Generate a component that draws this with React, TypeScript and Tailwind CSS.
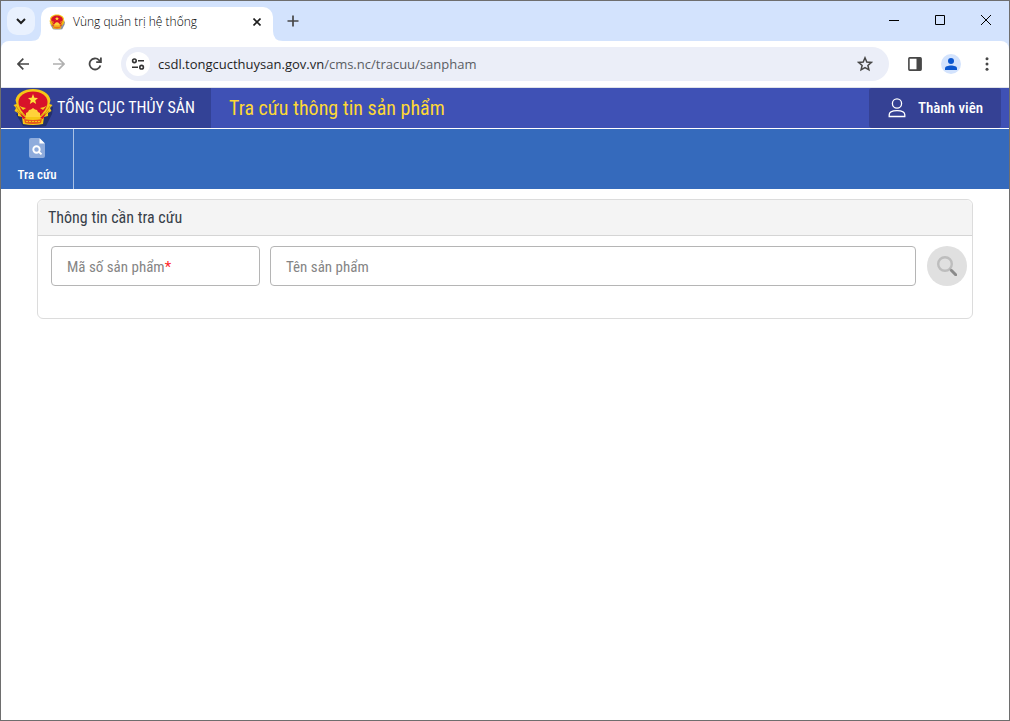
import { useState } from "react";

const Emblem = ({ className }: { className: string }) => (
  <svg viewBox="0 0 40 40" className={className} aria-hidden="true">
    <path d="M3 26 L10 38 Q21 40 33 38 L39 26 L40 19 Z" fill="#141b40" opacity="0.5" />
    <path
      d="M20 1 C11 1 4 5 2.5 12 L3.5 16 L0.5 17 L3 20 L1.5 23 L5 25 L5 28 L9 29 L10 36 Q20 38 30 36 L31 29 L35 28 L35 25 L38.5 23 L37 20 L39.5 17 L36.5 16 L37.5 12 C36 5 29 1 20 1 Z"
      fill="#f5c716"
    />
    <path d="M3 18 Q7 26 12 28 M37 18 Q33 26 28 28 M4 23 L11 30 M36 23 L29 30" stroke="#d79210" strokeWidth="1" fill="none" />
    <path d="M20 3.5 C12 3.5 5.5 8 5.5 14 C5.5 20 10 25 13 28 H27 C30 25 34.5 20 34.5 14 C34.5 8 28 3.5 20 3.5 Z" fill="#d8122a" />
    <path d="M20 6 L21.4 9.8 L25 10 L22.2 12.4 L23.2 16 L20 14 L16.8 16 L17.8 12.4 L15 10 L18.6 9.8 Z" fill="#ffe13a" />
    <path d="M6 17.5 Q8 19 13 20 L10 22 Z M34 17.5 Q32 19 27 20 L30 22 Z" fill="#f8cf1c" />
    <path d="M13 29 L13 25 L15 24 L16 22 L18 21.5 L20 20 L22 21.5 L24 22 L25 24 L27 25 L27 29 Z" fill="#ffd23a" />
    <path d="M7 25 L13 30 L10 31 Z M33 25 L27 30 L30 31 Z" fill="#d8122a" />
    <path d="M11 31 Q20 33 29 31 L28 35 Q20 37 12 35 Z" fill="#e65a1c" />
    <path d="M13 33.5 H27" stroke="#f5c716" strokeWidth="1" strokeDasharray="2 1" />
  </svg>
);

const TabStrip = () => (
  <div className="flex h-10 items-start bg-[#d3e3fd]">
    <button aria-label="Tìm thẻ" className="ml-1.5 mt-1.5 flex size-7 items-center justify-center rounded-[10px] bg-[#e9f1fe]">
      <svg viewBox="0 0 10 10" className="size-2.5" fill="none" stroke="#1f1f1f" strokeWidth="2">
        <path d="M1 3 L5 7 L9 3" />
      </svg>
    </button>
    <div className="mt-1.5 flex h-[34px] items-end">
      <svg viewBox="0 0 10 10" className="-ml-1 size-2.5" aria-hidden="true">
        <path d="M10 0 V10 H0 Q10 10 10 0" fill="#fff" />
      </svg>
      <div className="flex h-full w-[232px] items-center rounded-t-[10px] bg-white px-2 pb-1">
        <Emblem className="size-4 shrink-0" />
        <span className="ml-2 grow text-[12px] font-light text-black">Vùng quản trị hệ thống</span>
        <button aria-label="Đóng thẻ" className="flex size-4 items-center justify-center">
          <svg viewBox="0 0 8 8" className="size-2" stroke="#1f1f1f" strokeWidth="1.6">
            <path d="M0.5 0.5 L7.5 7.5 M7.5 0.5 L0.5 7.5" />
          </svg>
        </button>
      </div>
      <svg viewBox="0 0 10 10" className="size-2.5" aria-hidden="true">
        <path d="M0 0 V10 H10 Q0 10 0 0" fill="#fff" />
      </svg>
    </div>
    <button aria-label="Thẻ mới" className="ml-0.5 mt-3 flex size-4 items-center justify-center">
      <svg viewBox="0 0 12 12" className="size-3" stroke="#474747" strokeWidth="1.7">
        <path d="M6 0.5 V11.5 M0.5 6 H11.5" />
      </svg>
    </button>
    <div className="ml-auto flex">
      <button aria-label="Thu nhỏ" className="flex h-[38px] w-[46px] items-center justify-center">
        <svg viewBox="0 0 10 10" className="size-2.5" stroke="#000"><path d="M0 5.5 H10" /></svg>
      </button>
      <button aria-label="Phóng to" className="flex h-[38px] w-[46px] items-center justify-center">
        <svg viewBox="0 0 10 10" className="size-2.5" stroke="#000" fill="none"><path d="M0.5 0.5 H9.5 V9.5 H0.5 Z" /></svg>
      </button>
      <button aria-label="Đóng" className="flex h-[38px] w-[46px] items-center justify-center">
        <svg viewBox="0 0 10 10" className="size-2.5" stroke="#000"><path d="M0 0 L10 10 M10 0 L0 10" /></svg>
      </button>
    </div>
  </div>
);

const AddressBar = () => (
  <div className="bg-[#d3e3fd]">
    <div className="flex h-[47px] items-center rounded-t-lg border-b border-[#dfe2e8] bg-white px-3">
      <button aria-label="Quay lại" className="flex size-5 items-center justify-center">
        <svg viewBox="0 0 12 12" className="size-3" fill="none" stroke="#474747" strokeWidth="1.7">
          <path d="M12 6 H1.2 M6.3 0.7 L1 6 L6.3 11.3" />
        </svg>
      </button>
      <button aria-label="Tiếp" disabled className="ml-4 flex size-5 items-center justify-center">
        <svg viewBox="0 0 12 12" className="size-3" fill="none" stroke="#b0b0b0" strokeWidth="1.7">
          <path d="M0 6 H10.8 M5.7 0.7 L11 6 L5.7 11.3" />
        </svg>
      </button>
      <button aria-label="Tải lại" className="ml-4 flex size-5 items-center justify-center">
        <svg viewBox="0 0 14 14" className="size-3.5" fill="none" stroke="#474747" strokeWidth="1.8">
          <path d="M12.4 8.4 A5.5 5.5 0 1 1 11 3.1 L12.6 4.7 M12.9 0.5 V5.2 H8.2" />
        </svg>
      </button>
      <div className="ml-4 flex h-[34px] grow items-center rounded-full bg-[#ebeef8] pl-[5px] pr-3.5">
        <button aria-label="Thông tin trang" className="flex size-6 shrink-0 items-center justify-center rounded-full bg-white">
          <svg viewBox="0 0 14 12" className="h-3 w-3.5" fill="none" stroke="#333" strokeWidth="1.6">
            <circle cx="3.4" cy="2.8" r="1.8" />
            <path d="M7 2.8 H13 M1 9.2 H7" />
            <circle cx="10.6" cy="9.2" r="1.8" />
          </svg>
        </button>
        <a href="#" className="ml-2 grow pt-0.5 text-[13px] text-[#1f1f1f]">
          csdl.tongcucthuysan.gov.vn<span className="text-[#5a5d63]">/cms.nc/tracuu/sanpham</span>
        </a>
        <button aria-label="Đánh dấu" className="flex size-5 items-center justify-center">
          <svg viewBox="0 0 16 16" className="size-4" fill="none" stroke="#474747" strokeWidth="1.5">
            <path d="M8 1.8 L9.8 6 L14.3 6.4 L10.9 9.4 L11.9 13.8 L8 11.5 L4.1 13.8 L5.1 9.4 L1.7 6.4 L6.2 6 Z" />
          </svg>
        </button>
      </div>
      <button aria-label="Bảng bên" className="ml-4 flex size-5 items-center justify-center">
        <svg viewBox="0 0 14 14" className="size-3.5">
          <rect x="0.9" y="0.9" width="12.2" height="12.2" rx="0.8" fill="none" stroke="#474747" strokeWidth="1.6" />
          <path d="M8.5 1 H13 V13 H8.5 Z" fill="#474747" />
        </svg>
      </button>
      <button aria-label="Hồ sơ" className="ml-4 flex size-5 items-center justify-center rounded-full bg-[#d3e3fd]">
        <svg viewBox="0 0 12 12" className="size-3" fill="#0b57d0">
          <circle cx="6" cy="3" r="3" />
          <path d="M0 12 V10.4 C0 8.4 3 7.5 6 7.5 C9 7.5 12 8.4 12 10.4 V12 Z" />
        </svg>
      </button>
      <button aria-label="Trình đơn" className="ml-4 flex size-5 items-center justify-center">
        <svg viewBox="0 0 4 14" className="h-3.5 w-1" fill="#474747">
          <circle cx="2" cy="1.7" r="1.5" />
          <circle cx="2" cy="7" r="1.5" />
          <circle cx="2" cy="12.3" r="1.5" />
        </svg>
      </button>
    </div>
  </div>
);

const SiteHeader = () => (
  <header className="flex h-[41px] items-stretch border-b border-white bg-[#3f51b5] pr-2">
    <a href="#" className="flex w-[210px] items-center bg-[#334296] pl-3 text-[16px] text-white">
      <Emblem className="size-10 shrink-0" />
      <span className="ml-1 whitespace-nowrap">TỔNG CỤC THỦY SẢN</span>
    </a>
    <h1 className="flex grow items-center pl-[18px] text-[20px] font-normal text-[#fdd835]">Tra cứu thông tin sản phẩm</h1>
    <button className="flex w-[132px] items-center rounded-[3px] bg-[#354194] pl-[19px] text-[15px] font-medium text-white">
      <svg viewBox="0 0 18 20" className="h-5 w-[18px]" fill="none" stroke="#fff" strokeWidth="1.3">
        <circle cx="9" cy="5.5" r="4.6" />
        <path d="M1.2 18.5 V16.8 C1.2 14.2 3.6 12.6 9 12.6 C14.4 12.6 16.8 14.2 16.8 16.8 V18.5 Z" />
      </svg>
      <span className="ml-3 whitespace-nowrap">Thành viên</span>
    </button>
  </header>
);

const MenuBar = () => (
  <nav className="flex h-[60px] bg-[#356abc]">
    <a href="#" className="flex w-[73px] flex-col items-center border-r border-[#a9c1e4] pt-2 text-[13px] font-medium text-white">
      <svg viewBox="0 0 16 22" className="h-[22px] w-4" aria-hidden="true">
        <path d="M2 1 H10 L16 7 V19 Q16 21 14 21 H2 Q0 21 0 19 V3 Q0 1 2 1 Z" fill="#8facdc" />
        <path d="M10.5 1 L16 6.5 H10.5 Z" fill="#fff" />
        <circle cx="7.5" cy="12.5" r="3.2" fill="none" stroke="#fff" strokeWidth="1.9" />
        <path d="M9.7 14.6 L12.5 17.4" stroke="#fff" strokeWidth="2" />
      </svg>
      <span className="mt-1.5">Tra cứu</span>
    </a>
  </nav>
);

interface FieldProps {
  id: string;
  label: string;
  required?: boolean;
  className: string;
}

const Field = ({ id, label, required, className }: FieldProps) => {
  const [value, setValue] = useState("");

  return (
    <div className={`relative ${className}`}>
      <input
        id={id}
        value={value}
        required={required}
        onChange={(e) => setValue(e.target.value)}
        className="h-10 w-full rounded border border-[#b5b5b5] bg-white px-4 text-[15px] text-gray-800 outline-none focus:border-[#3f51b5]"
      />
      {/* nhãn nằm trong ô khi chưa nhập */}
      <label
        htmlFor={id}
        className={`pointer-events-none absolute inset-y-0 left-4 flex items-center pt-0.5 text-[15px] text-[#858585] ${value ? "invisible" : ""}`}
      >
        {label}
        {required && <span className="text-[#ff1f2b]">*</span>}
      </label>
    </div>
  );
};

const SearchPanel = () => (
  <section className="mx-9 mt-2.5 rounded-md border border-[#dcdcdc] bg-white">
    <h2 className="flex h-9 items-center rounded-t-md border-b border-[#d5d5d5] bg-[#f4f4f4] pl-2.5 text-[16px] text-[#38404a]">
      Thông tin cần tra cứu
    </h2>
    <form className="flex pt-2.5 pb-8 pl-[13px] pr-[5px]" onSubmit={(e) => e.preventDefault()}>
      <Field id="productCode" label="Mã số sản phẩm" required className="w-[209px]" />
      <Field id="productName" label="Tên sản phẩm" className="ml-2.5 grow" />
      <button type="submit" aria-label="Tìm kiếm" className="ml-[11px] flex size-10 items-center justify-center rounded-full bg-[#e0e0e0]">
        <svg viewBox="0 0 20 20" className="size-5" fill="none">
          <circle cx="8" cy="8" r="6.8" stroke="#bdbdbd" strokeWidth="2.4" />
          <path d="M12.8 12.8 L14.5 14.5" stroke="#b0b0b0" strokeWidth="2" />
          <path d="M14.5 14.5 L18.7 18.7" stroke="#8a8a8a" strokeWidth="3" strokeLinecap="round" />
        </svg>
      </button>
    </form>
  </section>
);

export default function App() {
  return (
    <div className="flex min-h-screen flex-col border border-[#6e6e6e] bg-white font-['Roboto_Condensed','Roboto',sans-serif]">
      <div className="font-['Open_Sans','Noto_Sans',sans-serif]">
        <TabStrip />
        <AddressBar />
      </div>
      <SiteHeader />
      <MenuBar />
      <main className="grow">
        <SearchPanel />
      </main>
    </div>
  );
}
